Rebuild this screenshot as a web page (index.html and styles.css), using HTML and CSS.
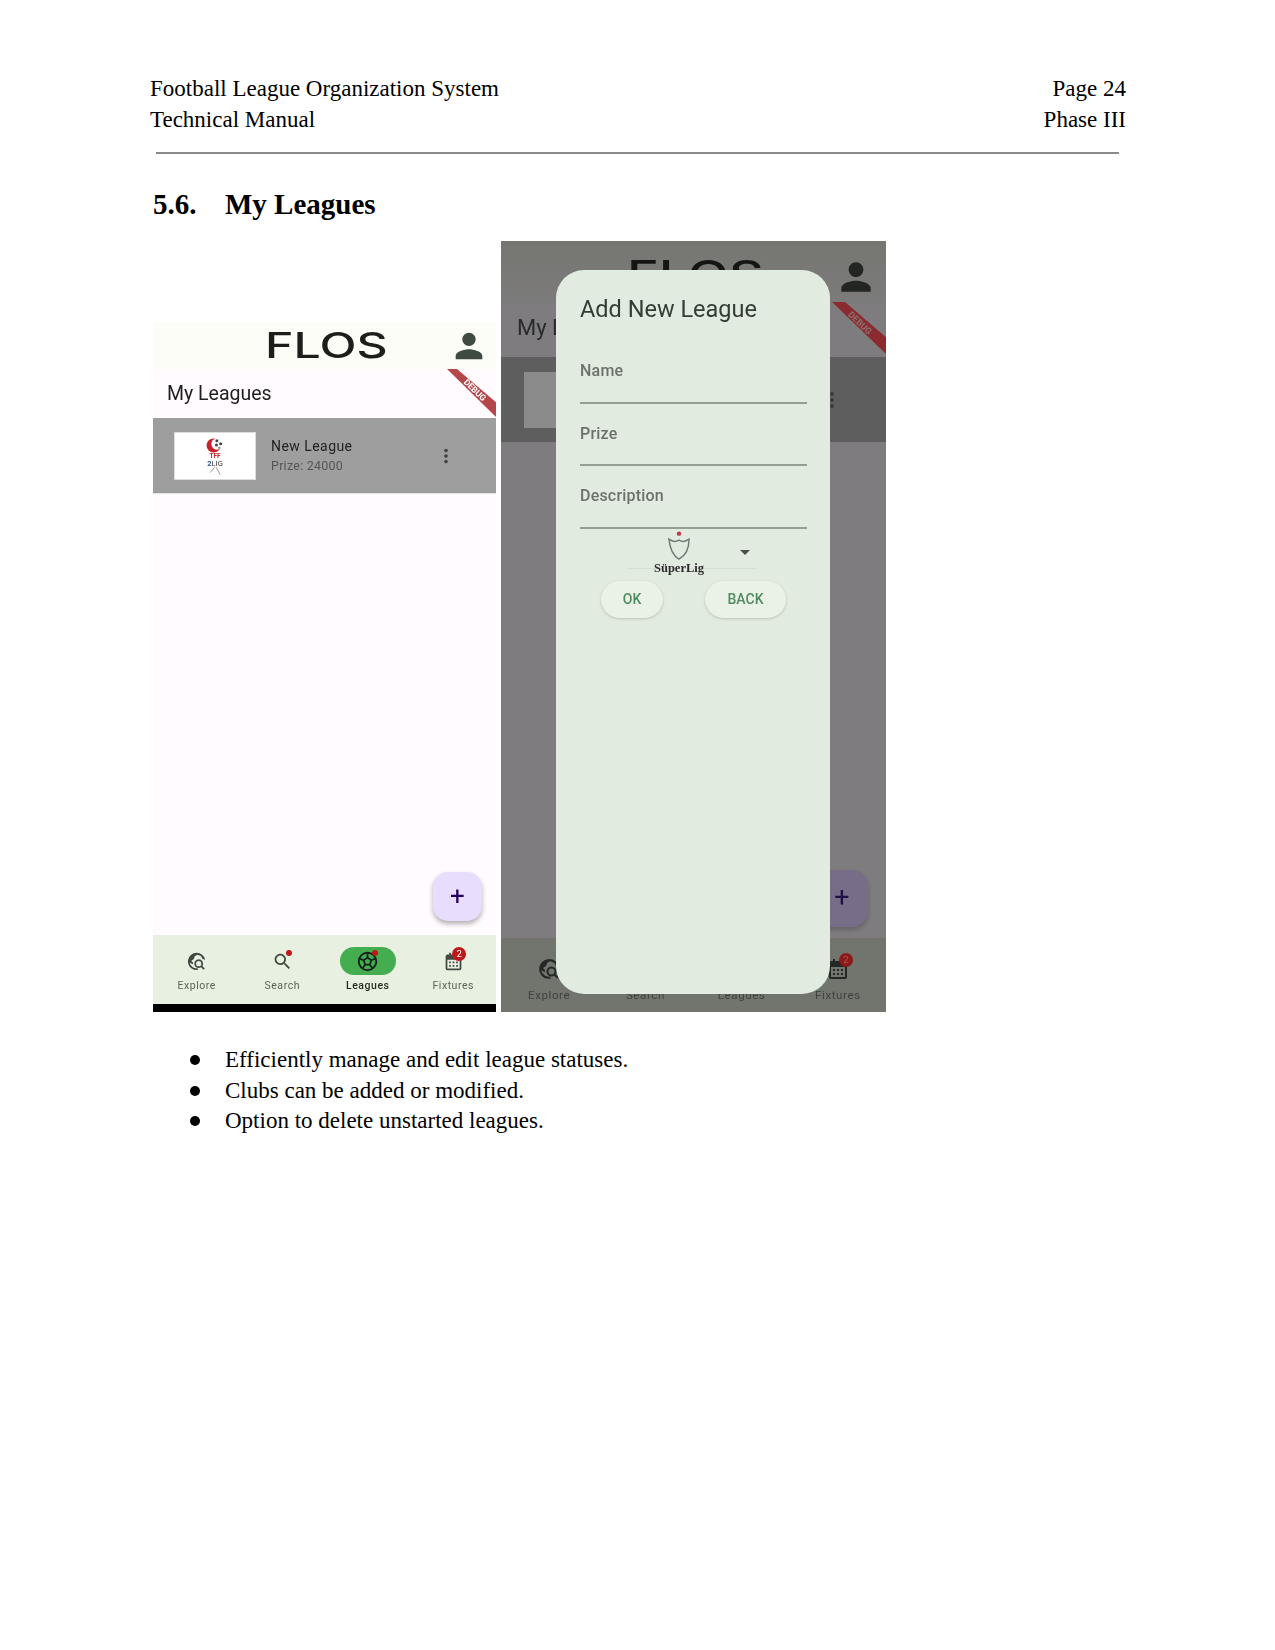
FILE: index.html
```html
<!DOCTYPE html>
<html>
<head>
  <title>Technical Manual - Page 24</title>
  <link rel="stylesheet" href="styles.css">
</head>
<body>
  <svg class="icon-defs" width="0" height="0">
    <defs>
      <symbol id="i-person" viewBox="0 0 24 24"><path d="M12 12c2.21 0 4-1.79 4-4s-1.79-4-4-4-4 1.79-4 4 1.79 4 4 4zm0 2c-2.67 0-8 1.34-8 4v2h16v-2c0-2.66-5.33-4-8-4z"/></symbol>
      <symbol id="i-more" viewBox="0 0 24 24"><path d="M12 8c1.1 0 2-.9 2-2s-.9-2-2-2-2 .9-2 2 .9 2 2 2zm0 2c-1.1 0-2 .9-2 2s.9 2 2 2 2-.9 2-2-.9-2-2-2zm0 6c-1.1 0-2 .9-2 2s.9 2 2 2 2-.9 2-2-.9-2-2-2z"/></symbol>
      <symbol id="i-search" viewBox="0 0 24 24"><path d="M15.5 14h-.79l-.28-.27C15.41 12.59 16 11.11 16 9.5 16 5.91 13.09 3 9.5 3S3 5.91 3 9.5 5.91 16 9.5 16c1.61 0 3.09-.59 4.23-1.57l.27.28v.79l5 4.99L20.49 19l-4.99-5zm-6 0C7.01 14 5 11.99 5 9.5S7.01 5 9.5 5 14 7.01 14 9.5 11.99 14 9.5 14z"/></symbol>
      <symbol id="i-explore" viewBox="0 0 24 24">
        <path d="M12 2a10 10 0 0 0-3 19.5l5 .2-1-2A8 8 0 0 1 4.2 13.5L8 15v-2l-2-2 3-2 1-3 3-1.8 4 1.5 2 3.3 3 1A10 10 0 0 0 12 2z"/>
        <path d="M14.5 9.5a5 5 0 1 0 2.7 9.2l2.8 2.8 1.5-1.5-2.8-2.8a5 5 0 0 0-4.2-7.7zm0 2a3 3 0 1 1 0 6 3 3 0 0 1 0-6z"/>
      </symbol>
      <symbol id="i-ball" viewBox="0 0 24 24">
        <circle cx="12" cy="12" r="10" fill="none" stroke="currentColor" stroke-width="2.2"/>
        <path d="M12 7.5l4.3 3.1-1.6 5h-5.4l-1.6-5z" fill="none" stroke="currentColor" stroke-width="2"/>
        <path d="M12 7.5V3M16.3 10.6l4.2-1.6M14.7 15.6l2.8 3.8M9.3 15.6l-2.8 3.8M7.7 10.6L3.5 9" fill="none" stroke="currentColor" stroke-width="2"/>
      </symbol>
      <symbol id="i-calendar" viewBox="0 0 24 24">
        <path d="M7 2h2v2h6V2h2v2h2a2 2 0 0 1 2 2v14a2 2 0 0 1-2 2H5a2 2 0 0 1-2-2V6a2 2 0 0 1 2-2h2zM5 10v10h14V10z"/>
        <path d="M7 12h2v2H7zM11 12h2v2h-2zM15 12h2v2h-2zM7 16h2v2H7zM11 16h2v2h-2zM15 16h2v2h-2z"/>
      </symbol>
    </defs>
  </svg>

  <div class="page">
    <div class="running-head">
      <div>Football League Organization System<br>Technical Manual</div>
      <div class="running-right">Page 24<br>Phase III</div>
    </div>
    <div class="rule"></div>

    <h2 class="section-title"><span class="section-no">5.6.</span>My Leagues</h2>

    <div class="shots">
      <div class="phone">
        <div class="app-bar">
          <span class="logo">FLOS</span>
          <svg class="app-person"><use href="#i-person"/></svg>
        </div>
        <div class="title-band">My Leagues</div>
        <div class="debug-ribbon"><span>DEBUG</span></div>
        <div class="league-row">
          <div class="thumb">
            <svg class="thumb-mark" viewBox="0 0 20 16">
              <circle cx="8" cy="8" r="7.5" fill="#c8202c"/>
              <circle cx="11.5" cy="6.5" r="6" fill="#fff"/>
              <circle cx="11.5" cy="3" r="1.6" fill="#444"/>
              <circle cx="15.5" cy="6" r="1.6" fill="#444"/>
              <circle cx="11" cy="7.5" r="1.6" fill="#444"/>
              <circle cx="14" cy="10.5" r="1.3" fill="#888"/>
            </svg>
            <span class="thumb-tff">TFF</span>
            <span class="thumb-lig"><b>2</b>LIG</span>
            <svg class="thumb-legs" viewBox="0 0 20 10"><path d="M9 0L3 7M11 0l5 10" fill="none" stroke="#777" stroke-width="1"/></svg>
          </div>
          <div class="league-text">
            <div class="league-name">New League</div>
            <div class="league-prize">Prize: 24000</div>
          </div>
          <svg class="league-more"><use href="#i-more"/></svg>
        </div>
        <div class="phone-body">
          <div class="fab">+</div>
        </div>
        <div class="nav">
          <div class="nav-item">
            <div class="nav-icon"><svg class="nav-svg"><use href="#i-explore"/></svg></div>
            <span>Explore</span>
          </div>
          <div class="nav-item">
            <div class="nav-icon"><svg class="nav-svg"><use href="#i-search"/></svg><i class="dot"></i></div>
            <span>Search</span>
          </div>
          <div class="nav-item nav-active">
            <div class="nav-icon"><svg class="nav-svg"><use href="#i-ball"/></svg><i class="dot"></i></div>
            <span>Leagues</span>
          </div>
          <div class="nav-item">
            <div class="nav-icon"><svg class="nav-svg"><use href="#i-calendar"/></svg><i class="count">2</i></div>
            <span>Fixtures</span>
          </div>
        </div>
        <div class="home-bar"></div>
      </div>

      <div class="phone-dim">
        <div class="dim-bar">
          <span class="dim-logo">FLOS</span>
          <svg class="dim-person"><use href="#i-person"/></svg>
        </div>
        <div class="dim-title">My L</div>
        <div class="dim-ribbon"><span>DEBUG</span></div>
        <div class="dim-row">
          <div class="dim-thumb"></div>
          <svg class="dim-more"><use href="#i-more"/></svg>
        </div>
        <div class="dim-body">
          <div class="dim-fab">+</div>
        </div>
        <div class="dim-nav">
          <div class="dim-item">
            <svg class="dim-svg"><use href="#i-explore"/></svg>
            <span>Explore</span>
          </div>
          <div class="dim-item">
            <svg class="dim-svg"><use href="#i-search"/></svg>
            <span>Search</span>
          </div>
          <div class="dim-item">
            <svg class="dim-svg"><use href="#i-ball"/></svg>
            <span>Leagues</span>
          </div>
          <div class="dim-item">
            <div class="dim-cal"><svg class="dim-svg"><use href="#i-calendar"/></svg><i class="dim-count">2</i></div>
            <span>Fixtures</span>
          </div>
        </div>

        <div class="dialog">
          <div class="dialog-title">Add New League</div>
          <div class="field">Name</div>
          <div class="field">Prize</div>
          <div class="field">Description</div>
          <div class="select-row">
            <div class="select-logo">
              <svg class="shield" viewBox="0 0 30 34">
                <circle cx="15" cy="4" r="2.4" fill="#c4374a"/>
                <path d="M4 10c4 3 8 3 11 1 3 2 7 2 11-1 0 10-3 18-11 22C8 28 5 20 4 10z" fill="none" stroke="#6f7a70" stroke-width="1.6"/>
              </svg>
              <span class="select-name">SüperLig</span>
            </div>
            <i class="select-arrow"></i>
          </div>
          <div class="dialog-actions">
            <div class="btn btn-ok">OK</div>
            <div class="btn btn-back">BACK</div>
          </div>
        </div>
      </div>
    </div>

    <ul class="points">
      <li>Efficiently manage and edit league statuses.</li>
      <li>Clubs can be added or modified.</li>
      <li>Option to delete unstarted leagues.</li>
    </ul>
  </div>
</body>
</html>
```

FILE: styles.css
```css
body {
  margin: 0;
  background-color: #fff;
  color: #000;
  font-family: "Liberation Serif", serif;
}
.icon-defs {
  position: absolute;
}
.page {
  width: 1275px;
  height: 1650px;
  padding-top: 74px;
  box-sizing: border-box;
  overflow: hidden;
}

/* running header */
.running-head {
  display: flex;
  justify-content: space-between;
  margin: 0 149px 0 150px;
  font-size: 23px;
  line-height: 30.5px;
}
.running-right {
  text-align: right;
}
.rule {
  height: 2px;
  margin: 17px 156px 0 156px;
  background-color: #8a8a8a;
}
.section-title {
  display: flex;
  margin: 33px 0 0 153px;
  font-size: 29px;
  line-height: 34px;
  font-weight: bold;
}
.section-no {
  width: 72px;
}

/* screenshots */
.shots {
  display: flex;
  align-items: flex-end;
  gap: 5px;
  height: 771px;
  margin: 20px 0 0 153px;
  font-family: Roboto, sans-serif;
}

.phone {
  position: relative;
  display: flex;
  flex-direction: column;
  width: 343px;
  height: 690px;
  background-color: #fffbfe;
  overflow: hidden;
  filter: blur(0.35px);
}
.app-bar {
  display: flex;
  flex: 0 0 47px;
  align-items: center;
  justify-content: space-between;
  padding-left: 112px;
  padding-right: 7px;
  background-color: #fbfdf6;
}
.logo {
  display: inline-block;
  font-family: Inter, sans-serif;
  font-size: 35px;
  font-weight: 500;
  line-height: 47px;
  color: #1d1d1b;
  transform: scaleX(1.38);
  transform-origin: left center;
}
.app-person {
  width: 40px;
  height: 40px;
  fill: #3f4a40;
}
.title-band {
  flex: 0 0 49px;
  padding-left: 14px;
  font-size: 19.5px;
  line-height: 49px;
  color: #1f1f1f;
}
.debug-ribbon {
  position: absolute;
  top: 47px;
  right: 0;
  width: 50px;
  height: 49px;
  background-color: #b5474b;
  clip-path: polygon(2% 0, 22% 0, 100% 68%, 100% 98%);
}
.debug-ribbon span {
  position: absolute;
  top: 21px;
  left: 29px;
  font-size: 8.5px;
  font-weight: 700;
  line-height: 10px;
  color: #fff;
  transform: translate(-50%, -50%) rotate(44deg);
}
.league-row {
  display: flex;
  flex: 0 0 76px;
  box-sizing: border-box;
  align-items: center;
  padding-left: 21px;
  background-color: #9f9e9f;
  border-bottom: 1px solid #e4e3e4;
}
.thumb {
  position: relative;
  display: flex;
  flex-direction: column;
  align-items: center;
  width: 82px;
  height: 48px;
  background-color: #fff;
  border: 1px solid #dcdcdc;
  box-sizing: border-box;
}
.thumb-mark {
  width: 19px;
  height: 15px;
  margin-top: 5px;
}
.thumb-tff {
  font-size: 6.5px;
  line-height: 7px;
  font-weight: 700;
  color: #c8202c;
}
.thumb-lig {
  font-size: 7.5px;
  line-height: 7px;
  color: #333;
}
.thumb-lig b {
  color: #2a4f9a;
}
.thumb-legs {
  width: 15px;
  height: 8px;
}
.league-text {
  margin-left: 15px;
  flex: 1;
}
.league-name {
  font-size: 14px;
  line-height: 20px;
  letter-spacing: 0.45px;
  color: #222;
}
.league-prize {
  font-size: 12.5px;
  line-height: 19px;
  letter-spacing: 0.25px;
  color: #555;
}
.league-more {
  width: 22px;
  height: 22px;
  margin-right: 39px;
  fill: #444;
}
.phone-body {
  display: flex;
  flex: 1;
  align-items: flex-end;
  justify-content: flex-end;
  padding: 0 14px 14px 0;
}
.fab {
  width: 49px;
  height: 49px;
  border-radius: 15px;
  background-color: #e9ddfd;
  box-shadow: 0 3px 5px rgba(0, 0, 0, 0.3);
  font-size: 26px;
  font-weight: 400;
  line-height: 49px;
  text-align: center;
  color: #21005d;
}
.nav {
  display: flex;
  flex: 0 0 69px;
  padding: 12px 0 0 1px;
  box-sizing: border-box;
  background-color: #e8f0e2;
}
.nav-item {
  display: flex;
  flex: 1;
  flex-direction: column;
  align-items: center;
  font-size: 10.5px;
  letter-spacing: 0.55px;
  color: #5a635a;
}
.nav-icon {
  position: relative;
  display: flex;
  align-items: center;
  justify-content: center;
  width: 56px;
  height: 28px;
  margin-bottom: 4px;
  border-radius: 14px;
}
.nav-svg {
  width: 21px;
  height: 21px;
  fill: #3f4a40;
  color: #14201a;
}
.nav-active span {
  font-weight: 500;
  color: #1f2a20;
}
.nav-active .nav-icon {
  background-color: #44ad50;
}
.nav-active .nav-svg {
  fill: none;
}
.dot {
  position: absolute;
  top: 3px;
  left: 32px;
  width: 6px;
  height: 6px;
  border-radius: 50%;
  background-color: #c01818;
}
.count {
  position: absolute;
  top: 0;
  left: 27px;
  width: 14px;
  height: 14px;
  border-radius: 50%;
  background-color: #c01818;
  font-size: 9.5px;
  font-style: normal;
  line-height: 14px;
  letter-spacing: 0;
  text-align: center;
  color: #fff;
}
.home-bar {
  flex: 0 0 8px;
  background-color: #000;
}

/* second screenshot, behind the dialog scrim */
.phone-dim {
  position: relative;
  display: flex;
  flex-direction: column;
  width: 385px;
  height: 771px;
  background-color: #7e7c7f;
  overflow: hidden;
  color: #333;
  filter: blur(0.5px);
}
.dim-bar {
  display: flex;
  flex: 0 0 63px;
  justify-content: space-between;
  padding: 14px 8px 0 126px;
  box-sizing: border-box;
  background-image: linear-gradient(#767672, #7c7b7b);
}
.dim-logo {
  display: inline-block;
  font-family: Inter, sans-serif;
  font-size: 39px;
  font-weight: 500;
  line-height: 40px;
  color: #151513;
  transform: scaleX(1.38);
  transform-origin: left top;
}
.dim-person {
  width: 44px;
  height: 44px;
  fill: #222522;
}
.dim-title {
  flex: 0 0 58px;
  margin-top: -5px;
  padding-left: 16px;
  font-size: 22px;
  line-height: 58px;
  color: #2a2a2a;
}
.dim-ribbon {
  position: absolute;
  top: 61px;
  right: 0;
  width: 54px;
  height: 52px;
  background-color: #8c2b2f;
  clip-path: polygon(0 0, 24% 0, 100% 68%, 100% 100%);
}
.dim-ribbon span {
  position: absolute;
  top: 21px;
  left: 28px;
  font-size: 9px;
  font-weight: 700;
  line-height: 10px;
  color: #8a7272;
  transform: translate(-50%, -50%) rotate(44deg);
}
.dim-row {
  display: flex;
  flex: 0 0 85px;
  align-items: center;
  padding-left: 23px;
  background-color: #5f5e5f;
  justify-content: space-between;
}
.dim-thumb {
  width: 92px;
  height: 56px;
  background-color: #8b8b8b;
}
.dim-more {
  width: 24px;
  height: 24px;
  margin-right: 42px;
  fill: #3c3c3c;
}
.dim-body {
  display: flex;
  flex: 1;
  align-items: flex-end;
  justify-content: flex-end;
  padding: 0 18px 11px 0;
}
.dim-fab {
  width: 55px;
  height: 57px;
  padding-left: 3px;
  box-sizing: border-box;
  border-radius: 16px;
  background-color: #776d89;
  box-shadow: 0 3px 5px rgba(0, 0, 0, 0.2);
  font-size: 27px;
  font-weight: 400;
  line-height: 55px;
  text-align: center;
  color: #1f1147;
}
.dim-nav {
  display: flex;
  flex: 0 0 74px;
  padding-top: 19px;
  box-sizing: border-box;
  background-color: #72756e;
}
.dim-item {
  display: flex;
  flex: 1;
  flex-direction: column;
  align-items: center;
  gap: 7px;
  font-size: 11.5px;
  letter-spacing: 0.6px;
  color: #3f433e;
}
.dim-svg {
  width: 24px;
  height: 24px;
  fill: #252925;
  color: #252925;
}
.dim-cal {
  position: relative;
  height: 24px;
}
.dim-count {
  position: absolute;
  top: -4px;
  left: 13px;
  width: 14px;
  height: 14px;
  border-radius: 50%;
  background-color: #8c1a1a;
  font-size: 9.5px;
  font-style: normal;
  line-height: 14px;
  letter-spacing: 0;
  text-align: center;
  color: #a85a5a;
}

.dialog {
  position: absolute;
  top: 29px;
  left: 55px;
  width: 274px;
  height: 724px;
  padding: 23px 23px 0 24px;
  box-sizing: border-box;
  border-radius: 28px;
  background-color: #e1ebdf;
}
.dialog-title {
  font-size: 23.5px;
  line-height: 32px;
  color: #333c35;
}
.field {
  height: 62.5px;
  box-sizing: border-box;
  padding-top: 20px;
  border-bottom: 2px solid #949e93;
  font-size: 16px;
  font-weight: 500;
  line-height: 20px;
  letter-spacing: 0.2px;
  color: #6b7269;
}
.dialog-title + .field {
  margin-top: 16px;
}
.select-row {
  position: relative;
  display: flex;
  align-items: flex-start;
  justify-content: center;
  height: 39px;
  margin: 0 50px 0 47px;
  border-bottom: 1px solid #d5dfd3;
}
.select-logo {
  display: flex;
  flex-direction: column;
  align-items: center;
  margin-right: 26px;
}
.shield {
  width: 28px;
  height: 31px;
  margin-top: 1px;
}
.select-name {
  font-family: "Liberation Serif", serif;
  font-size: 12.5px;
  font-weight: bold;
  line-height: 14px;
  color: #2c2c2c;
}
.select-arrow {
  position: absolute;
  top: 21px;
  right: 7px;
  width: 0;
  height: 0;
  border-left: 5px solid transparent;
  border-right: 5px solid transparent;
  border-top: 5px solid #4a4f4a;
}
.dialog-actions {
  display: flex;
  margin-top: 12px;
  padding-left: 21px;
  gap: 42px;
}
.btn {
  height: 37px;
  border-radius: 19px;
  background-color: #eaf2e8;
  box-shadow: 0 1px 3px rgba(0, 0, 0, 0.18);
  font-size: 14px;
  font-weight: 500;
  line-height: 37px;
  text-align: center;
  color: #4f8a5e;
}
.btn-ok {
  width: 62px;
}
.btn-back {
  width: 81px;
}

/* bullets */
.points {
  margin: 0;
  padding: 33px 0 0 225px;
  list-style: none;
  font-size: 23px;
  line-height: 30.5px;
}
.points li {
  position: relative;
}
.points li::before {
  content: "";
  position: absolute;
  top: 10px;
  left: -35px;
  width: 10px;
  height: 10px;
  border-radius: 50%;
  background-color: #000;
}
```
